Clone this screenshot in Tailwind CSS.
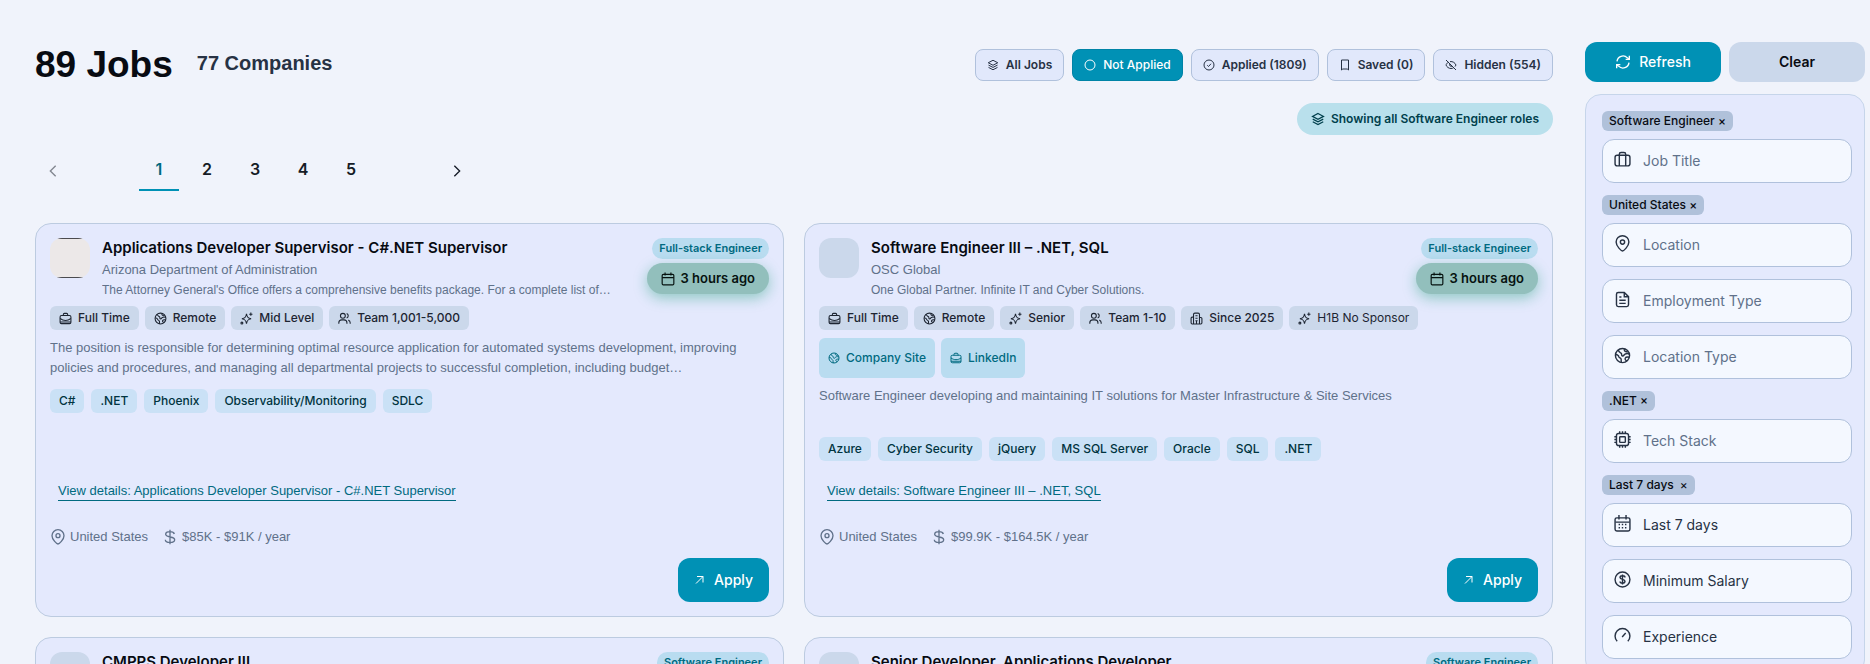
<!DOCTYPE html>
<html lang="en">
<head>
  <meta charset="UTF-8">
  <meta name="viewport" content="width=device-width, initial-scale=1.0">
  <title>89 Jobs</title>
  <script src="https://cdn.jsdelivr.net/npm/@tailwindcss/browser@4"></script>
</head>
<body class="bg-[#f0f3fb] text-[#080b12] font-['Inter',sans-serif] h-screen overflow-hidden">

  <!-- icon set -->
  <svg class="hidden" xmlns="http://www.w3.org/2000/svg">
    <symbol id="layers" viewBox="0 0 24 24"><path d="M12 2.5 21.5 7.5 12 12.5 2.5 7.5Z"/><path d="M3 12.2l9 4.6 9-4.6"/><path d="M3 16.8l9 4.7 9-4.7"/></symbol>
    <symbol id="circle" viewBox="0 0 24 24"><circle cx="12" cy="12" r="10"/></symbol>
    <symbol id="check" viewBox="0 0 24 24"><circle cx="12" cy="12" r="10"/><path d="m8.500 12.500 2.500 2.500 5-5.500"/></symbol>
    <symbol id="bookmark" viewBox="0 0 24 24"><path d="M5 2h14V22L16.500 20H7.500L5 22Z"/></symbol>
    <symbol id="eye-off" viewBox="0 0 24 24"><path d="M2 2l20 20"/><path d="M6.500 6.500C4 8 2.500 10.500 2 12c1.500 4 5.500 7 10 7 2 0 3.800-.500 5.300-1.500"/><path d="M10 5.200c5.500-.800 10 2.300 12 6.800-.500 1.200-1.200 2.300-2 3.200"/><path d="M9.900 9.900a3 3 0 0 0 4.200 4.200"/></symbol>
    <symbol id="refresh" viewBox="0 0 24 24"><path d="M3 11a9 9 0 0 1 15.500-5.200L21.500 8"/><path d="M21.500 2.500V8H16"/><path d="M21 13a9 9 0 0 1-15.500 5.200L2.500 16"/><path d="M2.500 21.500V16H8"/></symbol>
    <symbol id="left" viewBox="0 0 24 24"><path d="m16 4-8 8 8 8"/></symbol>
    <symbol id="right" viewBox="0 0 24 24"><path d="m8 4 8 8-8 8"/></symbol>
    <symbol id="suitcase" viewBox="0 0 24 24"><rect x="1.500" y="6" width="21" height="15" rx="3"/><path d="M7.500 21V4.500A2.500 2.500 0 0 1 10 2h4a2.500 2.500 0 0 1 2.500 2.500V21"/></symbol>
    <symbol id="briefcase" viewBox="0 0 24 24"><rect x="2" y="6.500" width="20" height="15" rx="2.500"/><path d="M8 6.500V4.500A2 2 0 0 1 10 2.500h4a2 2 0 0 1 2 2v2"/><path d="M2 12c6 4.500 14 4.500 20 0M12 12v.010M2 18.500h20"/></symbol>
    <symbol id="pin" viewBox="0 0 24 24"><path d="M12 22.500c-1.500 0-9-6.500-9-12.500a9 9 0 0 1 18 0c0 6-7.500 12.500-9 12.500Z"/><circle cx="12" cy="10" r="3"/></symbol>
    <symbol id="doc" viewBox="0 0 24 24"><path d="M14.500 2H6a2.500 2.500 0 0 0-2.500 2.500v15A2.500 2.500 0 0 0 6 22h12a2.500 2.500 0 0 0 2.500-2.500V8Z"/><path d="M14.500 2v6h6M7.500 8.500h3M7.500 13h9M7.500 17.500h9"/></symbol>
    <symbol id="globe" viewBox="0 0 24 24"><circle cx="12" cy="12" r="10"/><path d="M6 4.200c.500 3 2 3.300 4 4.300 1.500 1 0 3 1.500 4 2 1 2.500-1.500 4-2.500 2-1 4.500-1 6.200 0"/><path d="M2.300 10.500c2 .200 4.200 1.500 4.700 3.500.500 1.500 2.500 1.500 3 3 .400 1.500-.200 3.500.500 5"/><path d="M18.500 19.500c-2-.500-3.500-2-2.500-4 .800-1.500 3-1.500 5.500-1M15 3c-1 1.500 0 3 1.500 3.500 1.200.400 2 .500 3 0"/></symbol>
    <symbol id="chip" viewBox="0 0 24 24"><rect x="3.500" y="3.500" width="17" height="17" rx="3"/><rect x="8" y="8" width="8" height="8" rx="1"/><path d="M8 3.500V.500M12 3.500V.500M16 3.500V.500M8 23.500v-3M12 23.500v-3M16 23.500v-3M.500 8h3M.500 12h3M.500 16h3M20.500 8h3M20.500 12h3M20.500 16h3"/></symbol>
    <symbol id="calendar" viewBox="0 0 24 24"><rect x="2" y="4" width="20" height="18" rx="2"/><path d="M2 9.500h20M7 1V6M17 1V6"/></symbol>
    <symbol id="calendar-days" viewBox="0 0 24 24"><rect x="1.500" y="4" width="21" height="18.500" rx="2.500"/><path d="M2 10h20M7 0v6.500M17 0v6.500M6.500 13.500h2M11 13.500h2M15.500 13.500h2M6.500 18h2M11 18h2M15.500 18h2"/></symbol>
    <symbol id="coin" viewBox="0 0 24 24"><circle cx="12" cy="12" r="10.500"/><path d="M15.500 9c0-1.500-1.500-2.300-3.500-2.300S8.500 7.500 8.500 9.200c0 3.600 7 1.800 7 5.300 0 1.700-1.500 2.600-3.500 2.600s-3.500-.900-3.500-2.400M12 5v14"/></symbol>
    <symbol id="dollar" viewBox="0 0 24 24"><path d="M18.500 7.500c-.500-2-2.800-3.500-6.500-3.500s-6.500 1.200-6.500 4c0 5.500 13.500 2.500 13.500 8 0 2.700-2.800 4-7 4s-7-1.500-7-4M12 1v22"/></symbol>
    <symbol id="gauge" viewBox="0 0 24 24"><path d="M4.500 20a10.500 10.500 0 1 1 15 0M11.500 14l5-5.500"/></symbol>
    <symbol id="sparkles" viewBox="0 0 24 24"><path d="M12 3.500c1 6 2.500 8 8.500 9-6 1-7.500 3-8.500 9-1-6-2.500-8-8.500-9 6-1 7.500-3 8.500-9Z"/><path d="M20 1v6M17 4h6"/><circle cx="3.500" cy="20.500" r="1.800"/></symbol>
    <symbol id="users" viewBox="0 0 24 24"><circle cx="9" cy="7" r="4.500"/><path d="M1.500 21.500V20a5.500 5.500 0 0 1 5.500-5.500h4a5.500 5.500 0 0 1 5.500 5.500v1.500M16 2.800a4.500 4.500 0 0 1 0 8.400M19 15a5.500 5.500 0 0 1 3.500 5v1.500"/></symbol>
    <symbol id="building" viewBox="0 0 24 24"><path d="M6.500 22V4.500A2.500 2.500 0 0 1 9 2h6a2.500 2.500 0 0 1 2.500 2.500V22M6.500 9.500H4a2 2 0 0 0-2 2V20a2 2 0 0 0 2 2h16a2 2 0 0 0 2-2v-8a2 2 0 0 0-2-2h-2.500M10 7h4M10 11.500h4M10 16h4M12 16v6"/></symbol>
    <symbol id="arrow" viewBox="0 0 24 24"><path d="M4 19 18 5M6 5h12v12"/></symbol>
  </svg>

  <div class="flex items-start gap-8 pl-[35px] pr-[5px]">

    <main class="flex-1 min-w-0 pt-10">
      <header class="flex items-center justify-between h-[50px]">
        <div class="flex items-center gap-6 font-['Liberation_Sans',sans-serif]">
          <h1 class="text-[37px] leading-10 font-bold">89 Jobs</h1>
          <p class="text-xl leading-6 pb-1 font-bold text-[#273244]">77 Companies</p>
        </div>
        <div class="flex gap-2 text-xs font-semibold text-[#273244]">
          <button class="h-8 px-[11px] flex items-center gap-[7px] rounded-lg border border-[#b0c1dc] bg-[#e1e8fb]"><svg class="size-3 fill-none stroke-current stroke-2"><use href="#layers"/></svg>All Jobs</button>
          <button class="h-8 px-[11px] flex items-center gap-[7px] rounded-lg border border-[#0083a6] bg-[#0091b5] text-white font-medium"><svg class="size-3 fill-none stroke-current stroke-2"><use href="#circle"/></svg>Not Applied</button>
          <button class="h-8 px-[11px] flex items-center gap-[7px] rounded-lg border border-[#b0c1dc] bg-[#e1e8fb]"><svg class="size-3 fill-none stroke-current stroke-2"><use href="#check"/></svg>Applied (1809)</button>
          <button class="h-8 px-[11px] flex items-center gap-[7px] rounded-lg border border-[#b0c1dc] bg-[#e1e8fb]"><svg class="size-3 fill-none stroke-current stroke-2"><use href="#bookmark"/></svg>Saved (0)</button>
          <button class="h-8 px-[11px] flex items-center gap-[7px] rounded-lg border border-[#b0c1dc] bg-[#e1e8fb]"><svg class="size-3 fill-none stroke-current stroke-2"><use href="#eye-off"/></svg>Hidden (554)</button>
        </div>
      </header>

      <div class="flex justify-end mt-[13px]">
        <p class="h-8 px-3.5 flex items-center gap-1.5 rounded-full bg-[#b9e0ec] text-[#003f4c] text-xs font-semibold"><svg class="size-3.5 fill-none stroke-current stroke-2"><use href="#layers"/></svg>Showing all Software Engineer roles</p>
      </div>

      <nav class="flex mt-4 text-base font-semibold text-[#151b26]" aria-label="Pagination">
        <button class="w-9 h-10 flex items-center justify-center opacity-50" aria-label="Previous page"><svg class="size-4 fill-none stroke-current stroke-2"><use href="#left"/></svg></button>
        <div class="flex gap-2 mx-[68px]">
          <button class="w-10 h-10 pb-0.5 border-b-2 border-[#0091b5] text-[#006a80]">1</button>
          <button class="w-10 h-10 pb-0.5 border-b-2 border-transparent">2</button>
          <button class="w-10 h-10 pb-0.5 border-b-2 border-transparent">3</button>
          <button class="w-10 h-10 pb-0.5 border-b-2 border-transparent">4</button>
          <button class="w-10 h-10 pb-0.5 border-b-2 border-transparent">5</button>
        </div>
        <button class="w-9 h-10 flex items-center justify-center" aria-label="Next page"><svg class="size-4 fill-none stroke-current stroke-2"><use href="#right"/></svg></button>
      </nav>

      <div class="grid grid-cols-2 gap-5 mt-8">

        <article class="flex flex-col h-[394px] p-3.5 rounded-2xl border border-[#bccbe0] bg-[#e4e9fd]">
          <div class="flex gap-3 h-[60px]">
            <div class="size-10 shrink-0 rounded-xl overflow-hidden"><div class="size-10 bg-[#ece8e8] border-y border-[#4b4b4f]"></div></div>
            <div class="flex-1 min-w-0">
              <h2 class="text-[15px] leading-5 font-semibold">Applications Developer Supervisor - C#.NET Supervisor</h2>
              <p class="text-[13px] leading-6 text-[#60718a] font-['Liberation_Sans',sans-serif]">Arizona Department of Administration</p>
              <p class="text-xs leading-4 text-[#60718a] font-['Liberation_Sans',sans-serif] truncate">The Attorney General's Office offers a comprehensive benefits package. For a complete list of…</p>
            </div>
            <div class="flex flex-col items-end gap-1 w-[140px] shrink-0">
              <span class="h-[21px] px-[7px] flex items-center rounded-full bg-[#b9dcf0] text-[#006a80] text-[11px] font-semibold">Full-stack Engineer</span>
              <span class="h-[31px] px-3.5 flex items-center gap-1.5 rounded-full bg-[#92bfbc] text-[#06120f] text-[13px] font-semibold shadow-[0_4px_14px_rgba(16,150,110,0.4)]"><svg class="size-3.5 fill-none stroke-current stroke-2"><use href="#calendar"/></svg>3 hours ago</span>
            </div>
          </div>
          <div class="flex gap-1.5 mt-2 text-xs font-medium text-[#1d2532]">
            <span class="h-6 px-[9px] flex items-center gap-1.5 rounded-md bg-[#cbd8eb]"><svg class="size-[13px] fill-none stroke-current stroke-2"><use href="#briefcase"/></svg>Full Time</span>
            <span class="h-6 px-[9px] flex items-center gap-1.5 rounded-md bg-[#cbd8eb]"><svg class="size-[13px] fill-none stroke-current stroke-2"><use href="#globe"/></svg>Remote</span>
            <span class="h-6 px-[9px] flex items-center gap-1.5 rounded-md bg-[#cbd8eb]"><svg class="size-[13px] fill-none stroke-current stroke-2"><use href="#sparkles"/></svg>Mid Level</span>
            <span class="h-6 px-[9px] flex items-center gap-1.5 rounded-md bg-[#cbd8eb]"><svg class="size-[13px] fill-none stroke-current stroke-2"><use href="#users"/></svg>Team 1,001-5,000</span>
          </div>
          <p class="mt-2 h-10 text-[13px] leading-5 text-[#60718a] font-['Liberation_Sans',sans-serif]">The position is responsible for determining optimal resource application for automated systems development, improving<br>policies and procedures, and managing all departmental projects to successful completion, including budget…</p>
          <div class="flex gap-[7px] mt-[11px] text-xs font-medium text-[#003440]">
            <span class="h-6 px-[9px] flex items-center rounded-md bg-[#cae1f6]">C#</span>
            <span class="h-6 px-[9px] flex items-center rounded-md bg-[#cae1f6]">.NET</span>
            <span class="h-6 px-[9px] flex items-center rounded-md bg-[#cae1f6]">Phoenix</span>
            <span class="h-6 px-[9px] flex items-center rounded-md bg-[#cae1f6]">Observability/Monitoring</span>
            <span class="h-6 px-[9px] flex items-center rounded-md bg-[#cae1f6]">SDLC</span>
          </div>
          <a href="#" class="mt-auto ml-2 self-start text-[13px] leading-4 pb-px border-b border-[#006a80] text-[#006a80] font-['Liberation_Sans',sans-serif]">View details: Applications Developer Supervisor - C#.NET Supervisor</a>
          <div class="flex items-center mt-[26px] h-5 gap-3.5 text-[13px] text-[#60718a] font-['Liberation_Sans',sans-serif]">
            <span class="flex items-center gap-1"><svg class="size-4 fill-none stroke-current stroke-2"><use href="#pin"/></svg>United States</span>
            <span class="flex items-center gap-1"><svg class="size-4 fill-none stroke-current stroke-2"><use href="#dollar"/></svg>$85K - $91K / year</span>
          </div>
          <button class="self-end mt-[11px] h-11 px-4 flex items-center gap-2 rounded-xl bg-[#0091b5] text-white text-sm font-medium"><svg class="size-3 fill-none stroke-current stroke-2"><use href="#arrow"/></svg>Apply</button>
        </article>

        <article class="flex flex-col h-[394px] p-3.5 rounded-2xl border border-[#bccbe0] bg-[#e4e9fd]">
          <div class="flex gap-3 h-[60px]">
            <div class="size-10 shrink-0 rounded-xl bg-[#cbd8eb]"></div>
            <div class="flex-1 min-w-0">
              <h2 class="text-[15px] leading-5 font-semibold">Software Engineer III – .NET, SQL</h2>
              <p class="text-[13px] leading-6 text-[#60718a] font-['Liberation_Sans',sans-serif]">OSC Global</p>
              <p class="text-xs leading-4 text-[#60718a] font-['Liberation_Sans',sans-serif] truncate">One Global Partner. Infinite IT and Cyber Solutions.</p>
            </div>
            <div class="flex flex-col items-end gap-1 w-[140px] shrink-0">
              <span class="h-[21px] px-[7px] flex items-center rounded-full bg-[#b9dcf0] text-[#006a80] text-[11px] font-semibold">Full-stack Engineer</span>
              <span class="h-[31px] px-3.5 flex items-center gap-1.5 rounded-full bg-[#92bfbc] text-[#06120f] text-[13px] font-semibold shadow-[0_4px_14px_rgba(16,150,110,0.4)]"><svg class="size-3.5 fill-none stroke-current stroke-2"><use href="#calendar"/></svg>3 hours ago</span>
            </div>
          </div>
          <div class="flex gap-1.5 mt-2 text-xs font-medium text-[#1d2532]">
            <span class="h-6 px-[9px] flex items-center gap-1.5 rounded-md bg-[#cbd8eb]"><svg class="size-[13px] fill-none stroke-current stroke-2"><use href="#briefcase"/></svg>Full Time</span>
            <span class="h-6 px-[9px] flex items-center gap-1.5 rounded-md bg-[#cbd8eb]"><svg class="size-[13px] fill-none stroke-current stroke-2"><use href="#globe"/></svg>Remote</span>
            <span class="h-6 px-[9px] flex items-center gap-1.5 rounded-md bg-[#cbd8eb]"><svg class="size-[13px] fill-none stroke-current stroke-2"><use href="#sparkles"/></svg>Senior</span>
            <span class="h-6 px-[9px] flex items-center gap-1.5 rounded-md bg-[#cbd8eb]"><svg class="size-[13px] fill-none stroke-current stroke-2"><use href="#users"/></svg>Team 1-10</span>
            <span class="h-6 px-[9px] flex items-center gap-1.5 rounded-md bg-[#cbd8eb]"><svg class="size-[13px] fill-none stroke-current stroke-2"><use href="#building"/></svg>Since 2025</span>
            <span class="h-6 px-[9px] flex items-center gap-1.5 rounded-md bg-[#cbd8eb] font-normal"><svg class="size-[13px] fill-none stroke-current stroke-2"><use href="#sparkles"/></svg>H1B No Sponsor</span>
          </div>
          <div class="flex gap-1.5 mt-2 text-xs font-medium text-[#006a80]">
            <a href="#" class="h-10 px-[9px] flex items-center gap-1.5 rounded-md bg-[#b9dcf0]"><svg class="size-3 fill-none stroke-current stroke-2"><use href="#globe"/></svg>Company Site</a>
            <a href="#" class="h-10 px-[9px] flex items-center gap-1.5 rounded-md bg-[#b9dcf0]"><svg class="size-3 fill-none stroke-current stroke-2"><use href="#briefcase"/></svg>LinkedIn</a>
          </div>
          <p class="mt-2 h-10 text-[13px] leading-5 text-[#60718a] font-['Liberation_Sans',sans-serif]">Software Engineer developing and maintaining IT solutions for Master Infrastructure &amp; Site Services</p>
          <div class="flex gap-[7px] mt-[11px] text-xs font-medium text-[#003440]">
            <span class="h-6 px-[9px] flex items-center rounded-md bg-[#cae1f6]">Azure</span>
            <span class="h-6 px-[9px] flex items-center rounded-md bg-[#cae1f6]">Cyber Security</span>
            <span class="h-6 px-[9px] flex items-center rounded-md bg-[#cae1f6]">jQuery</span>
            <span class="h-6 px-[9px] flex items-center rounded-md bg-[#cae1f6]">MS SQL Server</span>
            <span class="h-6 px-[9px] flex items-center rounded-md bg-[#cae1f6]">Oracle</span>
            <span class="h-6 px-[9px] flex items-center rounded-md bg-[#cae1f6]">SQL</span>
            <span class="h-6 px-[9px] flex items-center rounded-md bg-[#cae1f6]">.NET</span>
          </div>
          <a href="#" class="mt-auto ml-2 self-start text-[13px] leading-4 pb-px border-b border-[#006a80] text-[#006a80] font-['Liberation_Sans',sans-serif]">View details: Software Engineer III – .NET, SQL</a>
          <div class="flex items-center mt-[26px] h-5 gap-3.5 text-[13px] text-[#60718a] font-['Liberation_Sans',sans-serif]">
            <span class="flex items-center gap-1"><svg class="size-4 fill-none stroke-current stroke-2"><use href="#pin"/></svg>United States</span>
            <span class="flex items-center gap-1"><svg class="size-4 fill-none stroke-current stroke-2"><use href="#dollar"/></svg>$99.9K - $164.5K / year</span>
          </div>
          <button class="self-end mt-[11px] h-11 px-4 flex items-center gap-2 rounded-xl bg-[#0091b5] text-white text-sm font-medium"><svg class="size-3 fill-none stroke-current stroke-2"><use href="#arrow"/></svg>Apply</button>
        </article>

        <article class="flex flex-col h-[394px] p-3.5 rounded-2xl border border-[#bccbe0] bg-[#e4e9fd]">
          <div class="flex gap-3">
            <div class="size-10 shrink-0 rounded-xl bg-[#cbd8eb]"></div>
            <h2 class="flex-1 text-[15px] leading-5 font-semibold">CMPPS Developer III</h2>
            <span class="h-[21px] px-[7px] flex items-center rounded-full bg-[#b9dcf0] text-[#006a80] text-[11px] font-semibold">Software Engineer</span>
          </div>
        </article>

        <article class="flex flex-col h-[394px] p-3.5 rounded-2xl border border-[#bccbe0] bg-[#e4e9fd]">
          <div class="flex gap-3">
            <div class="size-10 shrink-0 rounded-xl bg-[#cbd8eb]"></div>
            <h2 class="flex-1 text-[15px] leading-5 font-semibold">Senior Developer, Applications Developer</h2>
            <span class="h-[21px] px-[7px] flex items-center rounded-full bg-[#b9dcf0] text-[#006a80] text-[11px] font-semibold">Software Engineer</span>
          </div>
        </article>
      </div>
    </main>

    <aside class="w-[280px] shrink-0 pt-[42px]">
      <div class="grid grid-cols-2 gap-2">
        <button class="h-10 flex items-center justify-center gap-2 rounded-xl bg-[#0091b5] text-white text-sm font-medium"><svg class="size-4 fill-none stroke-current stroke-2"><use href="#refresh"/></svg>Refresh</button>
        <button class="h-10 rounded-xl bg-[#cbd8eb] text-sm font-semibold">Clear</button>
      </div>

      <form class="flex flex-col gap-3 mt-3 pt-4 pb-4 pl-4 pr-3 rounded-2xl border border-[#c6d5ea] bg-[#e4e9fd]">
        <div class="flex flex-col items-start gap-2">
          <button type="button" class="h-5 px-[7px] rounded-md bg-[#b0c1da] text-xs leading-5 font-medium">Software Engineer ×</button>
          <label class="w-full h-11 px-[11px] flex items-center gap-3 rounded-xl border border-[#b0c1dc] bg-[#f4f8ff]"><svg class="size-[17px] mb-1 shrink-0 fill-none stroke-[#273244] stroke-2"><use href="#suitcase"/></svg><input type="text" placeholder="Job Title" aria-label="Job Title" class="w-full text-sm outline-none placeholder:text-[#60718a]"></label>
        </div>
        <div class="flex flex-col items-start gap-2">
          <button type="button" class="h-5 px-[7px] rounded-md bg-[#b0c1da] text-xs leading-5 font-medium">United States ×</button>
          <label class="w-full h-11 px-[11px] flex items-center gap-3 rounded-xl border border-[#b0c1dc] bg-[#f4f8ff]"><svg class="size-[17px] mb-1 shrink-0 fill-none stroke-[#273244] stroke-2"><use href="#pin"/></svg><input type="text" placeholder="Location" aria-label="Location" class="w-full text-sm outline-none placeholder:text-[#60718a]"></label>
        </div>
        <label class="w-full h-11 px-[11px] flex items-center gap-3 rounded-xl border border-[#b0c1dc] bg-[#f4f8ff]"><svg class="size-[17px] mb-1 shrink-0 fill-none stroke-[#273244] stroke-2"><use href="#doc"/></svg><input type="text" placeholder="Employment Type" aria-label="Employment Type" class="w-full text-sm outline-none placeholder:text-[#60718a]"></label>
        <label class="w-full h-11 px-[11px] flex items-center gap-3 rounded-xl border border-[#b0c1dc] bg-[#f4f8ff]"><svg class="size-[17px] mb-1 shrink-0 fill-none stroke-[#273244] stroke-2"><use href="#globe"/></svg><input type="text" placeholder="Location Type" aria-label="Location Type" class="w-full text-sm outline-none placeholder:text-[#60718a]"></label>
        <div class="flex flex-col items-start gap-2">
          <button type="button" class="h-5 px-[7px] rounded-md bg-[#b0c1da] text-xs leading-5 font-medium">.NET ×</button>
          <label class="w-full h-11 px-[11px] flex items-center gap-3 rounded-xl border border-[#b0c1dc] bg-[#f4f8ff]"><svg class="size-[17px] mb-1 shrink-0 fill-none stroke-[#273244] stroke-2"><use href="#chip"/></svg><input type="text" placeholder="Tech Stack" aria-label="Tech Stack" class="w-full text-sm outline-none placeholder:text-[#60718a]"></label>
        </div>
        <div class="flex flex-col items-start gap-2">
          <button type="button" class="h-5 px-[7px] flex items-center gap-1.5 rounded-md bg-[#b0c1da] text-xs font-medium">Last 7 days <span class="font-normal">×</span></button>
          <label class="w-full h-11 px-[11px] flex items-center gap-3 rounded-xl border border-[#b0c1dc] bg-[#f4f8ff]"><svg class="size-[17px] mb-1 shrink-0 fill-none stroke-[#273244] stroke-2"><use href="#calendar-days"/></svg>
            <select aria-label="Date posted" class="w-full appearance-none text-sm text-[#273244] outline-none"><option>Last 7 days</option></select></label>
        </div>
        <label class="w-full h-11 px-[11px] flex items-center gap-3 rounded-xl border border-[#b0c1dc] bg-[#f4f8ff]"><svg class="size-[17px] mb-1 shrink-0 fill-none stroke-[#273244] stroke-2"><use href="#coin"/></svg>
          <select aria-label="Minimum Salary" class="w-full appearance-none text-sm text-[#273244] outline-none"><option>Minimum Salary</option></select></label>
        <label class="w-full h-11 px-[11px] flex items-center gap-3 rounded-xl border border-[#b0c1dc] bg-[#f4f8ff]"><svg class="size-[17px] mb-1 shrink-0 fill-none stroke-[#273244] stroke-2"><use href="#gauge"/></svg>
          <select aria-label="Experience" class="w-full appearance-none text-sm text-[#273244] outline-none"><option>Experience</option></select></label>
      </form>
    </aside>
  </div>

</body>
</html>
